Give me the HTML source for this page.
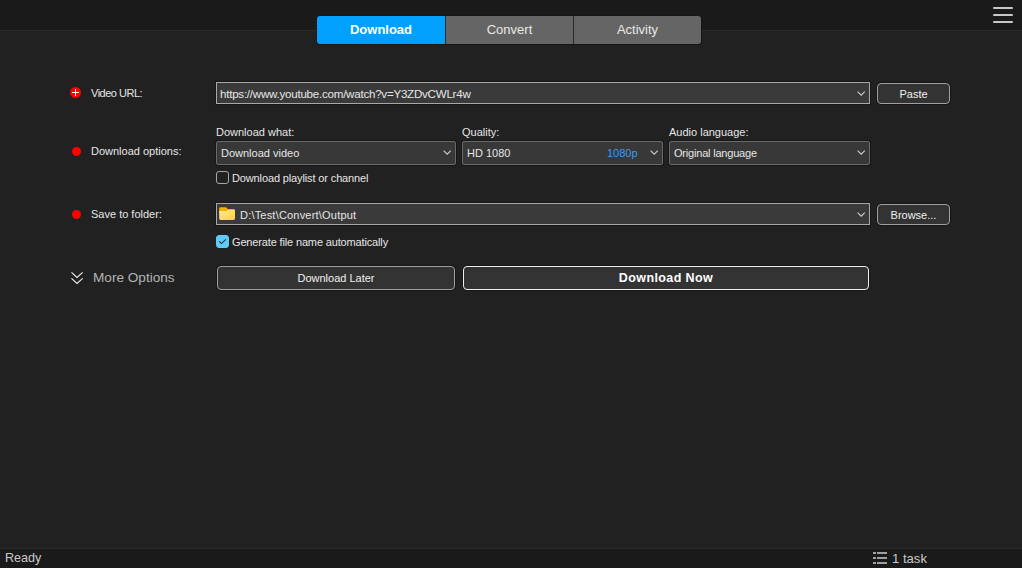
<!DOCTYPE html>
<html><head><meta charset="utf-8">
<style>
*{margin:0;padding:0;box-sizing:border-box}
html,body{width:1022px;height:568px;overflow:hidden;background:#212121;font-family:"Liberation Sans",sans-serif;position:relative}
.a{position:absolute}
.t{position:absolute;white-space:nowrap;line-height:1;color:#e6e6e6;font-size:11px}
#top{left:0;top:0;width:1022px;height:30px;background:#1a1a1a}
#topline{left:0;top:30px;width:1022px;height:1px;background:#2a2a2a}
.tab{position:absolute;top:16px;height:28px;background:#656565;color:#e8e8e8;font-size:13px;line-height:28px;text-align:center}
.ham{position:absolute;left:993px;width:20px;height:2px;background:#c8c8c8;border-radius:1px}
.dot{position:absolute;width:9px;height:9px;border-radius:50%;background:#f00}
.combo{position:absolute;background:#383838;border:1px solid #6a6a6a;border-radius:2px;box-shadow:0 0 0 1px #171717}
.combo.light{border-color:#a8a8a8;border-radius:0;background:#3a3a3a}
.btn{position:absolute;background:#333;border:1px solid #a0a0a0;border-radius:4px;box-shadow:0 0 0 1px #161616;color:#f0f0f0;font-size:11px;text-align:center}
.chev{position:absolute;width:9px;height:5px}
.cb{position:absolute;width:13px;height:13px;border:1px solid #a6a6a6;border-radius:3px;background:#212121}
#status{left:0;top:549px;width:1022px;height:19px;background:#1a1a1a}
#statusline{left:0;top:548px;width:1022px;height:1px;background:#2a2a2a}
</style></head><body>
<div id="top" class="a"></div>
<div id="topline" class="a"></div>

<!-- tabs -->
<div class="a" style="left:316px;top:15px;width:386px;height:30px;background:#181615;border-radius:4px"></div>
<div class="tab" style="left:317px;width:128px;background:#00a0ff;color:#fff;font-weight:bold;border-radius:3px 0 0 3px">Download</div>
<div class="a" style="left:445px;top:16px;width:1px;height:28px;background:#2a2a2a"></div>
<div class="tab" style="left:446px;width:127px">Convert</div>
<div class="a" style="left:573px;top:16px;width:1px;height:28px;background:#2a2a2a"></div>
<div class="tab" style="left:574px;width:127px;border-radius:0 3px 3px 0">Activity</div>

<!-- hamburger -->
<div class="ham" style="top:7px"></div>
<div class="ham" style="top:14px"></div>
<div class="ham" style="top:21px"></div>

<!-- Row 1: Video URL -->
<div class="dot" style="left:70px;top:87px;width:11px;height:11px"></div>
<div class="a" style="left:72px;top:91.9px;width:7px;height:1.3px;background:#fff"></div>
<div class="a" style="left:74.85px;top:89px;width:1.3px;height:7px;background:#fff"></div>
<div class="t" style="left:91px;top:88px;letter-spacing:-0.5px">Video URL:</div>

<div class="combo light" style="left:216px;top:82px;width:654px;height:22px"></div>
<div class="t" style="left:220px;top:88px;font-size:11.6px;line-height:12px;letter-spacing:-0.25px">https://www.youtube.com/watch?v=Y3ZDvCWLr4w</div>
<svg class="chev" style="left:857px;top:91px" viewBox="0 0 9 5"><path d="M0.6 0.6 L4.2 4.2 L7.8 0.6" fill="none" stroke="#d0d0d0" stroke-width="1.05"/></svg>
<div class="btn" style="left:877px;top:83px;width:73px;height:21px;line-height:21px">Paste</div>

<!-- Row 2: Download options -->
<div class="dot" style="left:72px;top:147px"></div>
<div class="t" style="left:91px;top:146px">Download options:</div>

<div class="t" style="left:216px;top:127px">Download what:</div>
<div class="t" style="left:462px;top:127px">Quality:</div>
<div class="t" style="left:669px;top:127px">Audio language:</div>

<div class="combo" style="left:216px;top:141px;width:240px;height:24px"></div>
<div class="t" style="left:221px;top:148px">Download video</div>
<svg class="chev" style="left:443px;top:150px" viewBox="0 0 9 5"><path d="M0.6 0.6 L4.2 4.2 L7.8 0.6" fill="none" stroke="#d0d0d0" stroke-width="1.05"/></svg>

<div class="combo" style="left:462px;top:141px;width:201px;height:24px"></div>
<div class="t" style="left:467px;top:148px">HD 1080</div>
<div class="t" style="left:607px;top:148px;color:#3d9bf0">1080p</div>
<svg class="chev" style="left:650px;top:150px" viewBox="0 0 9 5"><path d="M0.6 0.6 L4.2 4.2 L7.8 0.6" fill="none" stroke="#d0d0d0" stroke-width="1.05"/></svg>

<div class="combo" style="left:669px;top:141px;width:201px;height:24px"></div>
<div class="t" style="left:674px;top:148px;letter-spacing:-0.2px">Original language</div>
<svg class="chev" style="left:857px;top:150px" viewBox="0 0 9 5"><path d="M0.6 0.6 L4.2 4.2 L7.8 0.6" fill="none" stroke="#d0d0d0" stroke-width="1.05"/></svg>

<div class="cb" style="left:216px;top:171px"></div>
<div class="t" style="left:232px;top:173px;letter-spacing:-0.13px">Download playlist or channel</div>

<!-- Row 3: Save to folder -->
<div class="dot" style="left:72px;top:210px"></div>
<div class="t" style="left:91px;top:209px">Save to folder:</div>

<div class="combo light" style="left:216px;top:203px;width:654px;height:22px"></div>
<svg class="a" style="left:219px;top:207px" width="17" height="14" viewBox="0 0 17 14">
  <defs><linearGradient id="fg" x1="0" y1="0" x2="1" y2="1"><stop offset="0" stop-color="#ffeaa0"/><stop offset="1" stop-color="#fccf3c"/></linearGradient></defs>
  <path d="M0.2 1.6 Q0.2 0.2 1.6 0.2 L6.6 0.2 Q7.4 0.2 7.9 0.9 L8.8 2.1 L14.6 2.1 Q16 2.1 16 3.5 L16 6 L0.2 6 Z" fill="#f3b100"/>
  <path d="M0.2 4 L7.8 4 L8.8 2.9 L14.6 2.9 Q16 2.9 16 4.3 L16 11.6 Q16 12.9 14.6 12.9 L1.6 12.9 Q0.2 12.9 0.2 11.6 Z" fill="url(#fg)"/>
</svg>
<div class="t" style="left:240px;top:210px;letter-spacing:0.2px">D:\Test\Convert\Output</div>
<svg class="chev" style="left:857px;top:212px" viewBox="0 0 9 5"><path d="M0.6 0.6 L4.2 4.2 L7.8 0.6" fill="none" stroke="#d0d0d0" stroke-width="1.05"/></svg>
<div class="btn" style="left:877px;top:204px;width:73px;height:21px;line-height:21px">Browse...</div>

<div class="cb" style="left:216px;top:235px;background:#60cbf8;border-color:#60cbf8"></div>
<svg class="a" style="left:216px;top:235px" width="13" height="13" viewBox="0 0 13 13"><path d="M3.3 6.4 L5.4 8.6 L9.9 4.3" fill="none" stroke="#1e2c36" stroke-width="1.05"/></svg>
<div class="t" style="left:232px;top:237px;letter-spacing:-0.15px">Generate file name automatically</div>

<!-- Row 4 -->
<svg class="a" style="left:70px;top:271px" width="14" height="14" viewBox="0 0 14 14"><path d="M1.5 1.3 L7 6.4 L12.7 1.3 M1.5 7.3 L7 12.4 L12.7 7.3" fill="none" stroke="#f0f0f0" stroke-width="1.1"/></svg>
<div class="t" style="left:93px;top:271px;font-size:13.6px;color:#b4b4b4">More Options</div>

<div class="btn" style="left:217px;top:266px;width:238px;height:24px;line-height:22px">Download Later</div>
<div class="btn" style="left:463px;top:266px;width:406px;height:24px;line-height:22px;border-color:#f0f0f0;font-weight:bold;font-size:12.5px;letter-spacing:0.4px;color:#fff">Download Now</div>

<!-- status bar -->
<div id="statusline" class="a"></div>
<div id="status" class="a"></div>
<div class="t" style="left:5px;top:552px;font-size:12.6px;color:#c8c8c8">Ready</div>
<svg class="a" style="left:873px;top:551px" width="15" height="13" viewBox="0 0 15 13">
  <g fill="#a0a0a0"><rect x="0" y="1" width="3" height="2"/><rect x="4" y="1" width="10" height="2"/><rect x="0" y="6" width="3" height="2"/><rect x="4" y="6" width="10" height="2"/><rect x="0" y="11" width="3" height="2"/><rect x="4" y="11" width="10" height="2"/></g>
</svg>
<div class="t" style="left:892px;top:552px;font-size:13.1px;color:#c8c8c8">1 task</div>
</body></html>
